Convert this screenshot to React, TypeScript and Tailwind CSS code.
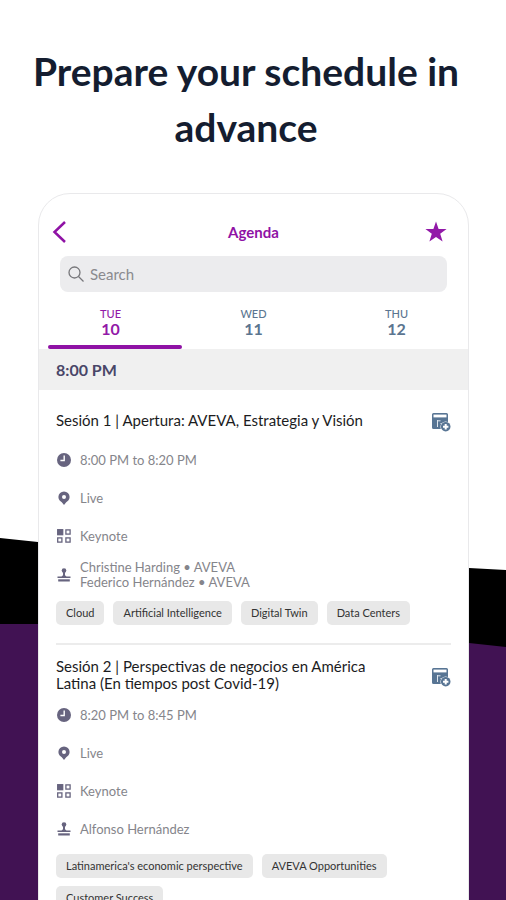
import { useState } from "react";

type Session = {
  id: number;
  title: string;
  time: string;
  place: string;
  kind: string;
  speakers: string[];
  tags: string[];
};

const days = [
  { name: "TUE", date: "10" },
  { name: "WED", date: "11" },
  { name: "THU", date: "12" },
];

const sessions: Session[] = [
  {
    id: 1,
    title: "Sesión 1 | Apertura: AVEVA, Estrategia y Visión",
    time: "8:00 PM to 8:20 PM",
    place: "Live",
    kind: "Keynote",
    speakers: ["Christine Harding • AVEVA", "Federico Hernández • AVEVA"],
    tags: ["Cloud", "Artificial Intelligence", "Digital Twin", "Data Centers"],
  },
  {
    id: 2,
    title: "Sesión 2 | Perspectivas de negocios en América Latina (En tiempos post Covid-19)",
    time: "8:20 PM to 8:45 PM",
    place: "Live",
    kind: "Keynote",
    speakers: ["Alfonso Hernández"],
    tags: ["Latinamerica's economic perspective", "AVEVA Opportunities", "Customer Success"],
  },
];

function ClockIcon() {
  return (
    <svg viewBox="0 0 16 16" className="h-4 w-4" aria-hidden="true">
      <circle cx="8" cy="8" r="7" fill="#67647f" />
      <path d="M8.2 3.6v4.9H4.4" fill="none" stroke="#fff" strokeWidth="1.4" />
    </svg>
  );
}

function PinIcon() {
  return (
    <svg viewBox="0 0 16 16" className="h-4 w-4" aria-hidden="true">
      <path
        d="M8 1.4a5.6 5.6 0 0 0-5.6 5.5c0 2.5 1.7 4.1 3.4 5.3L8 15l2.2-2.8c1.7-1.2 3.4-2.8 3.4-5.3A5.6 5.6 0 0 0 8 1.4Z"
        fill="#67647f"
      />
      <circle cx="8" cy="6.9" r="2" fill="#fff" />
    </svg>
  );
}

function GridIcon() {
  return (
    <svg viewBox="0 0 16 16" className="h-4 w-4" fill="none" stroke="#67647f" strokeWidth="1.3" aria-hidden="true">
      <rect x="1.7" y="1.7" width="5" height="5" fill="#67647f" />
      <rect x="9.9" y="1.9" width="4.2" height="4.2" />
      <rect x="1.7" y="9.9" width="4.2" height="4.2" />
      <rect x="9.9" y="9.9" width="4.2" height="4.2" />
    </svg>
  );
}

function SpeakerIcon() {
  return (
    <svg viewBox="0 0 16 16" className="h-4 w-4" fill="#67647f" aria-hidden="true">
      <circle cx="8" cy="3.6" r="2.3" />
      <path d="M7 5h2v3.2l1.5 1.3h4V11h-13V9.500h4L7 8.2Z" />
      <rect x="2.2" y="12.3" width="11.6" height="2.2" />
    </svg>
  );
}

function AddToAgendaIcon() {
  return (
    <svg viewBox="0 0 20 20" className="h-5 w-5" aria-hidden="true">
      <path d="M1 2.5Q1 1 2.5 1h13Q17 1 17 2.5V10a5.5 5.5 0 0 0-6 7H2.5Q1 17 1 15.5Z" fill="#587594" />
      <rect x="2.5" y="2.6" width="13" height="2.8" fill="#fff" />
      <path d="M6.5 8v7M6.5 8.8h3M9.5 11.5H11" stroke="#dfe6ee" fill="none" />
      <circle cx="14.7" cy="14.7" r="5.3" fill="#fff" />
      <circle cx="14.7" cy="14.7" r="4.8" fill="#587594" />
      <path d="M14.7 12v5.4M12 14.7h5.4" stroke="#fff" strokeWidth="2" />
    </svg>
  );
}

function Backdrop() {
  return (
    <svg
      viewBox="0 0 506 900"
      preserveAspectRatio="none"
      className="absolute inset-0 -z-10 h-full w-full"
      aria-hidden="true"
    >
      <path d="M0 538 38 542 469 568 506 570V900H0Z" fill="#000" />
      <path d="M0 624H38L469 643 506 647V900H0Z" fill="#411253" />
    </svg>
  );
}

function SessionCard({ session }: { session: Session }) {
  return (
    <li className="border-b-2 border-[#ececec] pt-3 pb-[18px] last:border-b-0">
      <div className="flex min-h-9 items-center justify-between gap-4">
        <h3 className="max-w-[330px] text-[15px] leading-[17px] text-[#1c1c1e]">{session.title}</h3>
        <button type="button" aria-label="Add to my agenda" className="mt-1 shrink-0">
          <AddToAgendaIcon />
        </button>
      </div>

      <ul className="mt-[3px] text-[13px] leading-[15px] text-[#85858b]">
        <li className="flex min-h-[38px] items-center gap-2">
          <ClockIcon />
          {session.time}
        </li>
        <li className="flex min-h-[38px] items-center gap-2">
          <PinIcon />
          {session.place}
        </li>
        <li className="flex min-h-[38px] items-center gap-2">
          <GridIcon />
          {session.kind}
        </li>
        <li className="flex min-h-[38px] items-center gap-2 py-[5px]">
          <SpeakerIcon />
          <div>
            {session.speakers.map((speaker) => (
              <p key={speaker}>{speaker}</p>
            ))}
          </div>
        </li>
      </ul>

      <ul className="mt-1.5 flex flex-wrap gap-x-[9px] gap-y-2">
        {session.tags.map((tag) => (
          <li key={tag} className="rounded-[5px] bg-[#e8e8e8] px-2.5 text-[11px] leading-6 text-[#333]">
            {tag}
          </li>
        ))}
      </ul>
    </li>
  );
}

export default function App() {
  const [day, setDay] = useState("10");
  const [query, setQuery] = useState("");

  return (
    <main className="relative isolate h-screen overflow-hidden bg-white font-['Lato','Open_Sans',sans-serif]">
      <Backdrop />

      <h1 className="pt-[43px] pr-[38px] pl-6 text-center text-[39px] leading-[56px] font-bold text-[#141d30]">
        Prepare your schedule in advance
      </h1>

      <section className="mr-[37px] ml-[38px] mt-[38px] min-h-screen rounded-t-[32px] border border-[#e9e9eb] bg-white">
        <header className="flex items-center justify-between px-3 pt-[26px]">
          <button type="button" aria-label="Back" className="w-8">
            <svg viewBox="0 0 24 24" className="h-6 w-6" fill="none" stroke="#8f12a5" strokeWidth="2.5" aria-hidden="true">
              <path d="M14 2 3.5 12 14 22" />
            </svg>
          </button>
          <h2 className="text-[15px] leading-6 font-bold text-[#8f12a5]">Agenda</h2>
          <button type="button" aria-label="Favorites" className="w-8">
            <svg viewBox="0 0 24 24" className="h-6 w-6" fill="#9219a8" aria-hidden="true">
              <path d="m12 1.5 2.6 7.5h8l-6.4 4.8 2.4 7.7-6.6-4.6-6.6 4.6 2.4-7.7L1.4 9h8Z" />
            </svg>
          </button>
        </header>

        <div className="mx-[21px] mt-3 flex h-9 items-center gap-1.5 rounded-lg bg-[#ececee] px-2">
          <svg viewBox="0 0 16 16" className="h-4 w-4" fill="none" stroke="#77777b" strokeWidth="1.3" aria-hidden="true">
            <circle cx="6.5" cy="6.5" r="5.5" />
            <path d="m10.5 10.5 5 5" />
          </svg>
          <input
            type="search"
            aria-label="Search"
            placeholder="Search"
            value={query}
            onChange={(e) => setQuery(e.target.value)}
            className="min-w-0 flex-1 bg-transparent text-[15px] text-[#444] outline-none placeholder:text-[#8a8a8e]"
          />
        </div>

        <nav className="mt-[15px] grid grid-cols-3">
          {days.map((d) => (
            <button
              key={d.date}
              type="button"
              onClick={() => setDay(d.date)}
              className={day === d.date ? "text-[#9219a8]" : "text-[#5b7590]"}
            >
              <span className="block text-[11px] leading-[13px] font-medium">{d.name}</span>
              <span className="block text-[16px] leading-[18px] font-bold">{d.date}</span>
              <span
                className={
                  day === d.date
                    ? "mt-[7px] ml-[9px] block h-1 rounded-full bg-[#8f12a5]"
                    : "mt-[7px] block h-1"
                }
              />
            </button>
          ))}
        </nav>

        <h2 className="bg-[#f0f0f0] px-[17px] text-[16px] leading-[41px] font-bold text-[#494668]">8:00 PM</h2>

        <ul className="px-[17px]">
          {sessions.map((session) => (
            <SessionCard key={session.id} session={session} />
          ))}
        </ul>
      </section>
    </main>
  );
}
